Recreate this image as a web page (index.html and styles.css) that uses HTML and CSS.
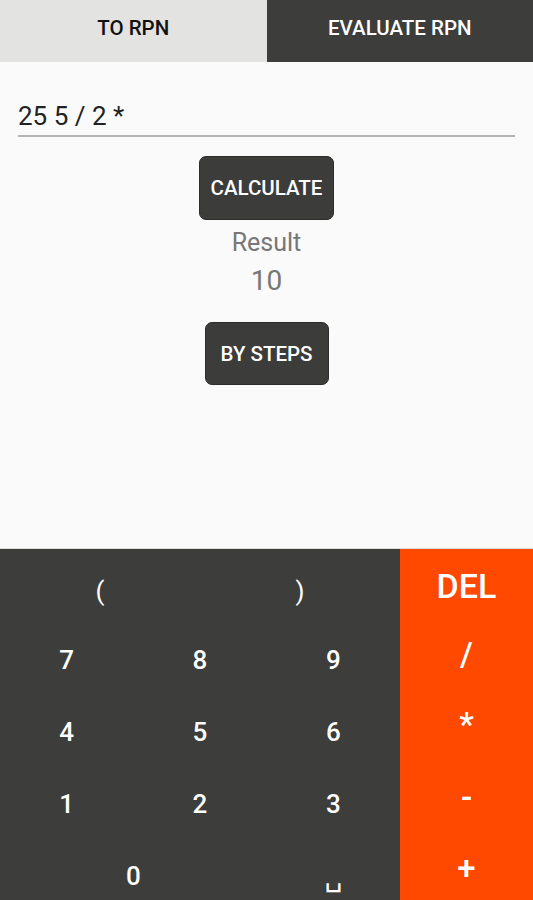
FILE: index.html
```html
<!DOCTYPE html>
<html lang="en">
<head>
<meta charset="UTF-8">
<meta name="viewport" content="width=device-width, initial-scale=1.0">
<title>RPN Calculator</title>
<link rel="stylesheet" href="styles.css">
</head>
<body>
<div class="app">
    <div class="tabs">
        <div class="tab tab-active">TO RPN</div>
        <div class="tab">EVALUATE RPN</div>
    </div>

    <div class="main">
        <div class="field">25 5 / 2 *</div>
        <button class="btn btn-calc">CALCULATE</button>
        <div class="result-label">Result</div>
        <div class="result-value">10</div>
        <button class="btn btn-steps">BY STEPS</button>
    </div>

    <div class="keypad">
        <div class="keys">
            <div class="key span3 paren">(</div>
            <div class="key span3 paren">)</div>
            <div class="key span2">7</div>
            <div class="key span2">8</div>
            <div class="key span2">9</div>
            <div class="key span2">4</div>
            <div class="key span2">5</div>
            <div class="key span2">6</div>
            <div class="key span2">1</div>
            <div class="key span2">2</div>
            <div class="key span2">3</div>
            <div class="key span4">0</div>
            <div class="key span2 space">&#9251;</div>
        </div>
        <div class="ops">
            <div class="op op-del">DEL</div>
            <div class="op">/</div>
            <div class="op">*</div>
            <div class="op">-</div>
            <div class="op">+</div>
        </div>
    </div>
</div>
</body>
</html>
```

FILE: styles.css
```css
body {
    font-family: Roboto, 'Liberation Sans', sans-serif;
    background-color: #fafafa;
    margin: 0;
    padding: 0;
}
.app {
    display: flex;
    flex-direction: column;
    height: 900px;
    overflow: hidden;
}
.tabs {
    display: flex;
    height: 62px;
}
.tab {
    flex: 1;
    display: flex;
    align-items: center;
    justify-content: center;
    padding-bottom: 6px;
    box-sizing: border-box;
    background-color: #3d3d3b;
    color: #fff;
    font-size: 20.5px;
    font-weight: 500;
}
.tab-active {
    background-color: #e3e3e1;
    color: #111;
}
.main {
    flex: 1;
    display: flex;
    flex-direction: column;
    align-items: center;
}
.field {
    align-self: stretch;
    margin: 38px 18px 0;
    padding-bottom: 3px;
    border-bottom: 2px solid #b5b5b5;
    font-size: 26px;
    line-height: 32px;
    color: #222;
}
.btn {
    margin-top: 19px;
    height: 64px;
    padding: 0 11px;
    border: 1px solid #2c2c2a;
    border-radius: 7px;
    background-color: #3c3c3a;
    color: #fff;
    font-family: Roboto, 'Liberation Sans', sans-serif;
    font-size: 20.5px;
    font-weight: 500;
}
.btn-steps {
    margin-top: 26px;
    height: 63px;
    padding: 0 15px;
}
.result-label {
    margin-top: 8px;
    font-size: 25px;
    line-height: 30px;
    color: #777;
}
.result-value {
    margin-top: 8px;
    font-size: 28px;
    line-height: 30px;
    color: #777;
}
.keypad {
    display: flex;
    height: 351px;
    border-top: 1px solid #ddd;
}
.keys {
    width: 400px;
    display: grid;
    grid-template-columns: repeat(6, 1fr);
    grid-template-rows: repeat(5, 72px);
    background-color: #3d3d3b;
}
.key {
    display: flex;
    align-items: center;
    justify-content: center;
    padding-top: 6px;
    color: #fff;
    font-size: 26px;
    font-weight: 500;
}
.paren {
    padding-top: 12px;
    font-weight: 400;
}
.span2 { grid-column: span 2; }
.span3 { grid-column: span 3; }
.span4 { grid-column: span 4; }
.space {
    font-family: 'DejaVu Sans', sans-serif;
    font-size: 28px;
}
.ops {
    flex: 1;
    display: grid;
    grid-template-rows: 70px 68px 72px 74px 1fr;
    background-color: #ff4800;
}
.op {
    display: flex;
    align-items: center;
    justify-content: center;
    padding-top: 3px;
    color: #fff;
    font-size: 33px;
    font-weight: 500;
}
.op-del {
    font-size: 34px;
}
```
